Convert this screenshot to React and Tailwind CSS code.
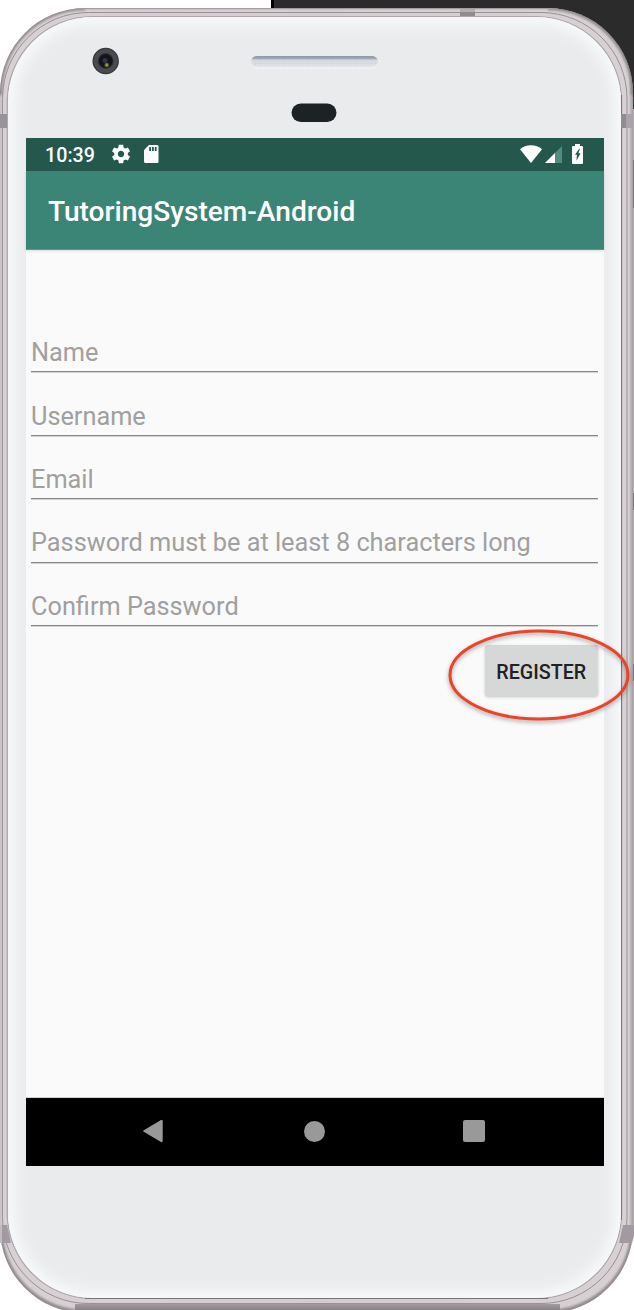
import React from "react";

const FIELDS = [
  { label: "Name", type: "text" },
  { label: "Username", type: "text" },
  { label: "Email", type: "email" },
  { label: "Password must be at least 8 characters long", type: "text" },
  { label: "Confirm Password", type: "text" },
];

function DeviceFrame() {
  return (
    <svg className="absolute inset-0" width="634" height="1310" viewBox="0 0 634 1310" aria-hidden="true">
      <defs>
        <linearGradient id="metal" x1="0" y1="0" x2="1" y2="0">
          <stop offset="0" stopColor="#c4bdc1" />
          <stop offset="0.004" stopColor="#d8d1d4" />
          <stop offset="0.5" stopColor="#d3ccd0" />
          <stop offset="0.993" stopColor="#d8d1d4" />
          <stop offset="1" stopColor="#a29ca0" />
        </linearGradient>
        <linearGradient id="base" x1="0" y1="0" x2="0" y2="1">
          <stop offset="0" stopColor="#a29ca0" />
          <stop offset="1" stopColor="#878185" />
        </linearGradient>
        <filter id="soft" x="-10%" y="-10%" width="120%" height="120%">
          <feGaussianBlur stdDeviation="7" />
        </filter>
        <filter id="shade" x="-10%" y="-10%" width="120%" height="120%">
          <feGaussianBlur stdDeviation="1.2" />
        </filter>
        <clipPath id="face">
          <rect x="8" y="17" width="613" height="1281" rx="85" />
        </clipPath>
        <clipPath id="body">
          <rect x="0" y="8" width="633" height="1305" rx="85" />
        </clipPath>
        <linearGradient id="speaker" x1="0" y1="0" x2="0" y2="1">
          <stop offset="0" stopColor="#8e98a3" />
          <stop offset="0.22" stopColor="#a0a8b2" />
          <stop offset="0.35" stopColor="#d6d9df" />
          <stop offset="1" stopColor="#e5e7ec" />
        </linearGradient>
        <radialGradient id="lens">
          <stop offset="0" stopColor="#111119" />
          <stop offset="0.48" stopColor="#14141a" />
          <stop offset="0.62" stopColor="#47494e" />
          <stop offset="0.85" stopColor="#4b4d52" />
          <stop offset="1" stopColor="#292b31" />
        </radialGradient>
        <pattern id="mesh" width="3" height="3" patternUnits="userSpaceOnUse">
          <path d="M0 .5H3M.5 0V3" stroke="#d0d3db" strokeWidth=".5" />
        </pattern>
      </defs>
      <path d="M271 0H634V108H271Z" fill="#2b2b2b" />
      <path d="M271 0H274V12H271Z" fill="#000" />
      <path d="M632 97h2v12h-2Z" fill="#354448" />
      <rect x="632" y="109" width="2" height="1120" fill="#b3adb1" />
      <rect x="0" y="8" width="633" height="1305" rx="85" fill="url(#metal)" />
      <g clipPath="url(#body)">
        <path d="M0 95A85 85 0 0 1 85 8M548 8A85 85 0 0 1 633 95M0 1227A85 85 0 0 0 85 1312M548 1312A85 85 0 0 0 633 1227" fill="none" stroke="#81797d" strokeWidth="4.5" filter="url(#shade)" opacity=".8" />
        <path d="M70 8.5H560" stroke="#a39ca0" strokeWidth="1.5" />
      </g>
      <rect x="75" y="1304" width="485" height="6" fill="url(#base)" />
      <rect x="2.5" y="12.5" width="624.5" height="1291" rx="86" fill="none" stroke="#989195" strokeWidth="1" />
      <rect x="7.3" y="16.5" width="614.2" height="1282" rx="85" fill="none" stroke="#aca5aa" strokeWidth="1.2" />
      <path d="M621.5 95V1220M85 1298.5H548" stroke="#77757a" strokeWidth="1.1" />
      <rect x="8" y="17" width="613" height="1281" rx="85" fill="#eaebed" />
      <g clipPath="url(#face)">
        <rect x="5" y="14" width="619" height="1287" rx="87" fill="none" stroke="#f8f9fb" strokeWidth="21" filter="url(#soft)" />
      </g>
      <path d="M460 9h15v7h-15Z" fill="#918b8e" />
      <path d="M460 9h15v3h-15Z" fill="#b4adb1" />
      <path d="M0 114H7V128H0Z" fill="#98939a" />
      <path d="M621 114H632V128H621Z" fill="#aaa4aa" />
      <path d="M621 114H626V128H621Z" fill="#918b92" />
      <path d="M0 1225H7L11 1243H0Z" fill="#a19aa0" />
      <path d="M623 1225H634V1236L632 1243H619Z" fill="#a19aa0" />
      <path d="M0 1225H2V1243H0Z" fill="#c1bbc1" />
      <path d="M633.5 160V208M633.5 493v17M633.5 664v17" stroke="#77757a" strokeWidth="1" />

      <circle cx="105.7" cy="61" r="13.2" fill="url(#lens)" />
      <circle cx="105" cy="60.5" r="2.5" fill="#333449" />
      <circle cx="106.7" cy="65" r="2.3" fill="#65672f" />
      <circle cx="106.8" cy="65" r="1" fill="#a2a447" />
      <rect x="251" y="56.8" width="127" height="12" rx="6" fill="#f3f4f5" />
      <rect x="251" y="56" width="127" height="11.5" rx="5.7" fill="url(#speaker)" />
      <rect x="253" y="60" width="123" height="6" rx="3" fill="url(#mesh)" />
      <rect x="291.5" y="103.5" width="45" height="18.5" rx="9.25" fill="#1d2224" />
    </svg>
  );
}

function GearIcon() {
  return (
    <svg className="-mt-px" width="22" height="22" viewBox="0 0 24 24" fill="#fff">
      <path d="M19.43 12.98c.04-.32.07-.64.07-.98s-.03-.66-.07-.98l2.11-1.65c.19-.15.24-.42.12-.64l-2-3.46c-.12-.22-.39-.3-.61-.22l-2.49 1c-.52-.4-1.08-.73-1.69-.98l-.38-2.65C14.46 2.18 14.25 2 14 2h-4c-.25 0-.46.18-.49.42l-.38 2.65c-.61.25-1.17.59-1.69.98l-2.49-1c-.23-.09-.49 0-.61.22l-2 3.46c-.13.22-.07.49.12.64l2.11 1.65c-.04.32-.07.65-.07.98s.03.66.07.98l-2.11 1.65c-.19.15-.24.42-.12.64l2 3.46c.12.22.39.3.61.22l2.49-1c.52.4 1.08.73 1.69.98l.38 2.65c.03.24.24.42.49.42h4c.25 0 .46-.18.49-.42l.38-2.65c.61-.25 1.17-.59 1.69-.98l2.49 1c.23.09.49 0 .61-.22l2-3.46c.12-.22.07-.49-.12-.64l-2.11-1.65zM12 15.5c-1.93 0-3.5-1.57-3.5-3.5s1.57-3.5 3.5-3.5 3.5 1.57 3.5 3.5-1.57 3.5-3.5 3.5z" />
    </svg>
  );
}

function StatusBar() {
  return (
    <div className="flex h-[33px] items-center bg-[#25584c] pl-[19px] text-white">
      <span className="w-[65px] pt-0.5 text-[19.7px] leading-[33px] font-medium">10:39</span>
      <GearIcon />
      <svg className="-mt-px ml-3 shrink-0" width="15" height="18" viewBox="0 0 15 18">
        <path d="M5 0H13Q14.5 0 14.5 1.5V16.5Q14.5 18 13 18H1.5Q0 18 0 16.5V5Z" fill="#fff" />
        <path d="M5.2 2h1.8v4H5.2zM8 2h1.8v4H8zM10.8 2h1.8v4h-1.8z" fill="#25584c" />
      </svg>
      <svg className="-mt-0.5 ml-auto" width="22" height="18" viewBox="0 0 22 18">
        <path d="M0 4.2Q4.5 .2 11 .2T22 4.2L11 18Z" fill="#fff" />
      </svg>
      <svg className="ml-[3px]" width="17" height="17" viewBox="0 0 17 17">
        <path d="M0 17L17 0V17Z" fill="#508c80" />
        <path d="M0 17L10 7V17Z" fill="#fff" />
      </svg>
      <svg className="-mt-0.5 mr-[21px] ml-[10px]" width="11" height="20" viewBox="0 0 11 20">
        <path d="M3 0H8V2H10Q11 2 11 3V19Q11 20 10 20H1Q0 20 0 19V3Q0 2 1 2H3Z" fill="#fff" />
        <path d="M7.2 4.8L3 10.8H5L4.4 16.8L8.6 9.2H6.4L8 4.8Z" fill="#25584c" />
      </svg>
    </div>
  );
}

function NavigationBar() {
  return (
    <nav className="flex h-[68px] items-center bg-black pb-0.5">
      <svg className="ml-[117px]" width="21" height="24" viewBox="0 0 21 24" aria-label="Back">
        <path d="M.8 11.2Q-.5 12 .8 12.8L18 23Q19.7 23.5 19.7 22V2Q19.7 .5 18 1Z" fill="#999" />
      </svg>
      <span className="ml-[140px] size-[21px] rounded-full bg-[#999]" />
      <span className="ml-[138px] size-[22px] rounded-[2px] bg-[#999]" />
    </nav>
  );
}

export default function App() {
  return (
    <div className="relative h-[1310px] w-[634px] overflow-hidden bg-white pt-[138px] font-['Roboto',sans-serif]">
      <DeviceFrame />
      <main className="relative ml-[26px] flex h-[1028px] w-[578px] flex-col bg-[#fafafa]">
        <StatusBar />
        <header className="flex h-[79px] items-center border-b border-[#4d9b8c] bg-[#3b8577] pt-1 pl-[22px] shadow-[0_1px_3px_rgba(0,0,0,0.12)]">
          <h1 className="text-[28.1px] leading-none font-medium whitespace-nowrap text-white">TutoringSystem-Android</h1>
        </header>
        <form className="flex grow flex-col border-b border-[#cfcfcf] pt-[59px] pr-1.5 pl-[5px]" onSubmit={(e) => e.preventDefault()}>
          {FIELDS.map((f) => (
            <input
              key={f.label}
              type={f.type}
              placeholder={f.label}
              className="block h-[63.4px] w-full shrink-0 border-b border-[#888] bg-transparent pt-[25px] text-[25.3px] leading-[30px] shadow-[0_1px_0_#d2d2d2] outline-none placeholder:text-[#a0a0a0] placeholder:opacity-100"
            />
          ))}
          <div className="relative mt-[19.5px] h-[51px] w-[113.5px] self-end">
            <button className="h-full w-full rounded-[3px] bg-[#d6d8d7] pt-[3px] text-[19.7px] font-medium text-[#212121] shadow-[0_1px_3px_rgba(0,0,0,0.22)]">REGISTER</button>
            <svg className="pointer-events-none absolute top-[-20px] left-[-40.5px] max-w-none drop-shadow-[0_2px_2px_rgba(0,0,0,0.35)]" width="190" height="100" viewBox="0 0 190 100" aria-hidden="true">
              <ellipse cx="95" cy="50" rx="89" ry="44" fill="none" stroke="#eb4427" strokeWidth="3" />
            </svg>
          </div>
        </form>
        <NavigationBar />
      </main>
    </div>
  );
}
